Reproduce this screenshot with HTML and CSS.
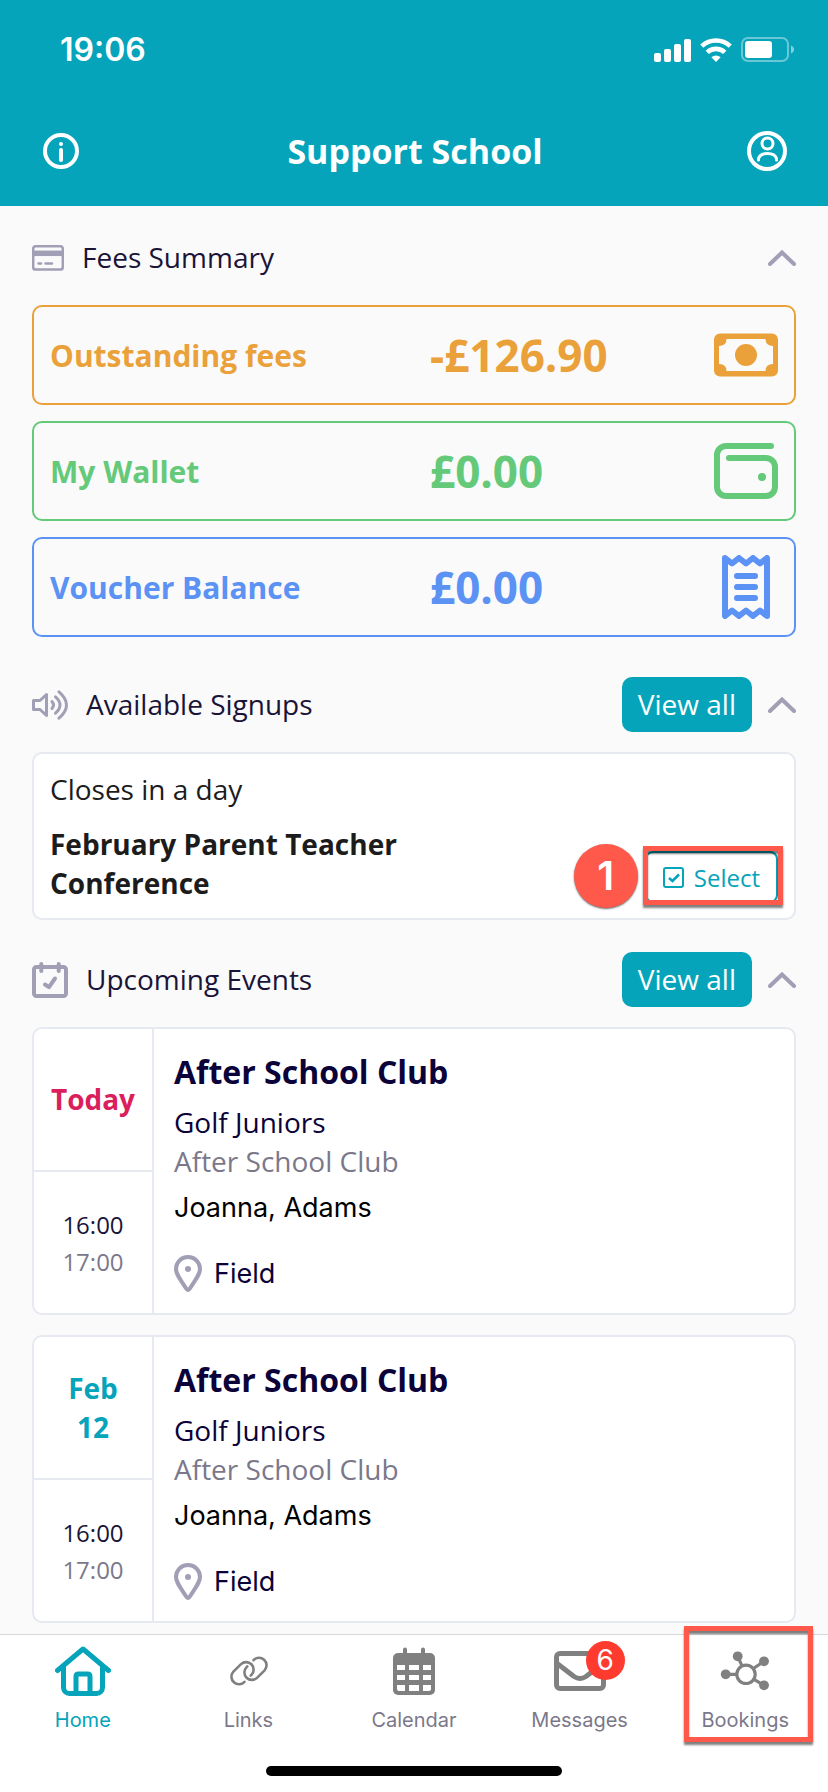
FILE: index.html
```html
<!DOCTYPE html>
<html lang="en">
<head>
  <meta charset="UTF-8">
  <meta name="viewport" content="width=device-width, initial-scale=1.0">
  <title>Support School</title>
  <link rel="stylesheet" href="styles.css">
</head>
<body>
  <header class="header">
    <div class="status">
      <span class="time">19:06</span>
      <div class="status-icons">
        <svg width="37" height="24" viewBox="0 0 37 24" fill="#fff">
          <rect x="0" y="15" width="7" height="9" rx="2"/>
          <rect x="10" y="11" width="7" height="13" rx="2"/>
          <rect x="20" y="6" width="7" height="18" rx="2"/>
          <rect x="30" y="1" width="7" height="23" rx="2"/>
        </svg>
        <svg width="32" height="24" viewBox="0 0 32 24" fill="none" stroke="#fff" stroke-width="4.6">
          <path d="M1.8 8.2a20.5 20.5 0 0 1 28.4 0"/>
          <path d="M7.2 14.4a12.8 12.8 0 0 1 17.6 0"/>
          <path d="M16 24l-4.6-4.7a6.6 6.6 0 0 1 9.2 0z" fill="#fff" stroke="none"/>
        </svg>
        <svg width="53" height="25" viewBox="0 0 53 25">
          <rect x="1" y="1" width="46" height="23" rx="6" fill="none" stroke="#fff" stroke-width="2" opacity=".4"/>
          <rect x="4" y="4" width="27" height="17" rx="3" fill="#fff"/>
          <path d="M50 8.500c4 1.500 4 6.500 0 8z" fill="#fff" opacity=".5"/>
        </svg>
      </div>
    </div>
    <div class="title-bar">
      <button class="icon-btn" aria-label="Information">
        <svg width="36" height="36" viewBox="0 0 36 36" fill="none" stroke="#fff" stroke-width="4" stroke-linecap="round">
          <circle cx="18" cy="18" r="16"/>
          <path d="M18 17v10"/>
          <circle cx="18" cy="11" r="2" fill="#fff" stroke="none"/>
        </svg>
      </button>
      <h1>Support School</h1>
      <button class="icon-btn profile" aria-label="Profile">
        <svg width="40" height="40" viewBox="0 0 40 40" fill="none" stroke="#fff" stroke-width="3" stroke-linecap="round">
          <circle cx="20" cy="20" r="18" stroke-width="4"/>
          <circle cx="20.500" cy="12.500" r="5.500"/>
          <path d="M11.500 29v-1.500q1.500-5 9-5t9 5V29"/>
        </svg>
      </button>
    </div>
  </header>

  <main>
    <section>
      <div class="section-head">
        <svg width="32" height="26" viewBox="0 0 32 26" fill="none" stroke="#a19fb5" stroke-width="2.500">
          <rect x="1.200" y="1.200" width="29.600" height="23.400" rx="2.500"/>
          <path d="M1 8.300h30" stroke-width="5.500"/>
          <path d="M6.500 18.500h2.500M13.500 18.500h6.500" stroke-linecap="round"/>
        </svg>
        <h2>Fees Summary</h2>
        <button class="icon-btn" aria-label="Collapse fees summary">
          <svg class="chevron" width="28" height="16" viewBox="0 0 28 16"><path d="M2 14L14 2.500 26 14"/></svg>
        </button>
      </div>
      <div class="fees">
        <a href="#fees" class="fee orange">
          <span class="fee-label">Outstanding fees</span>
          <span class="fee-amount">-£126.90</span>
          <svg width="64" height="64" viewBox="0 0 64 64" fill="currentColor">
            <path fill-rule="evenodd" d="M6 10.500h52a6 6 0 0 1 6 6v31a6 6 0 0 1-6 6H6a6 6 0 0 1-6-6v-31a6 6 0 0 1 6-6zM12.500 16q0 7-7.500 7v18q7.500 0 7.500 7h39q0-7 7.500-7V23q-7.500 0-7.500-7z"/>
            <circle cx="32" cy="32" r="11"/>
          </svg>
        </a>
        <a href="#wallet" class="fee green">
          <span class="fee-label">My Wallet</span>
          <span class="fee-amount">£0.00</span>
          <svg width="64" height="64" viewBox="0 0 64 64" fill="none" stroke="currentColor" stroke-width="6" stroke-linecap="round">
            <path d="M57 7H12a9 9 0 0 0-9 9v32a9 9 0 0 0 9 9h40a9 9 0 0 0 9-9V28a9 9 0 0 0-9-9H15"/>
            <circle cx="48" cy="38" r="4" fill="currentColor" stroke="none"/>
          </svg>
        </a>
        <a href="#voucher" class="fee blue">
          <span class="fee-label">Voucher Balance</span>
          <span class="fee-amount">£0.00</span>
          <svg width="64" height="64" viewBox="0 0 64 64" fill="none" stroke="currentColor" stroke-width="6" stroke-linecap="round" stroke-linejoin="round">
            <path d="M11 3l7 5.500L25 3l7 5.500L39 3l7 5.500L53 3v58l-7-5.500-7 5.500-7-5.500-7 5.500-7-5.500-7 5.500z"/>
            <path d="M23 21h18M23 32h18M23 43h18"/>
          </svg>
        </a>
      </div>
    </section>

    <section>
      <div class="section-head">
        <svg width="36" height="30" viewBox="0 0 36 30" fill="none" stroke="#a19fb5" stroke-width="3" stroke-linejoin="round" stroke-linecap="round">
          <path d="M1.500 10.500H8l6.500-6v21l-6.500-6H1.500z"/>
          <path d="M20 11.500q3 3.500 0 7"/>
          <path d="M23.500 6.800q9 8.200 0 16.400"/>
          <path d="M27 1.800q15 13.200 0 26.400"/>
        </svg>
        <h2>Available Signups</h2>
        <button class="view-all">View all</button>
        <button class="icon-btn" aria-label="Collapse available signups">
          <svg class="chevron" width="28" height="16" viewBox="0 0 28 16"><path d="M2 14L14 2.500 26 14"/></svg>
        </button>
      </div>
      <div class="card signup">
        <p class="closes">Closes in a day</p>
        <div class="signup-row">
          <h3>February Parent Teacher Conference</h3>
          <div class="select-wrap">
            <button class="select-btn">
              <svg width="21" height="21" viewBox="0 0 21 21" fill="none" stroke="currentColor" stroke-width="2">
                <rect x="1" y="1" width="19" height="19" rx="2"/>
                <path d="M6 11l3.500 3 6.500-6.500" stroke-width="2.500"/>
              </svg>
              Select
            </button>
            <span class="highlight"></span>
            <span class="step">1</span>
          </div>
        </div>
      </div>
    </section>

    <section class="events">
      <div class="section-head">
        <svg width="36" height="36" viewBox="0 0 36 36" fill="none" stroke="#a19fb5" stroke-width="4" stroke-linecap="round" stroke-linejoin="round">
          <rect x="2" y="5" width="32" height="29" rx="2.500"/>
          <path d="M9.300 2v7M26.700 2v7"/>
          <path d="M13 22.500l4 2.700 6-8.700"/>
        </svg>
        <h2>Upcoming Events</h2>
        <button class="view-all">View all</button>
        <button class="icon-btn" aria-label="Collapse upcoming events">
          <svg class="chevron" width="28" height="16" viewBox="0 0 28 16"><path d="M2 14L14 2.500 26 14"/></svg>
        </button>
      </div>

      <article class="card event">
        <div class="event-side">
          <div class="event-date today">Today</div>
          <div class="event-time"><span>16:00</span><span class="muted">17:00</span></div>
        </div>
        <div class="event-body">
          <h3>After School Club</h3>
          <p>Golf Juniors</p>
          <p class="muted">After School Club</p>
          <p class="person">Joanna, Adams</p>
          <p class="place">
            <svg width="28" height="37" viewBox="0 0 28 37" fill="none" stroke="#a19fb5" stroke-width="4" stroke-linejoin="round">
              <path d="M14 2C7 2 2 7.500 2 14c0 5 3 8.500 10.500 20q1.500 1.800 3 0C23 22.500 26 19 26 14c0-6.500-5-12-12-12z"/>
              <circle cx="14" cy="14" r="3" fill="#a19fb5" stroke="none"/>
            </svg>
            Field
          </p>
        </div>
      </article>

      <article class="card event">
        <div class="event-side">
          <div class="event-date">Feb<br>12</div>
          <div class="event-time"><span>16:00</span><span class="muted">17:00</span></div>
        </div>
        <div class="event-body">
          <h3>After School Club</h3>
          <p>Golf Juniors</p>
          <p class="muted">After School Club</p>
          <p class="person">Joanna, Adams</p>
          <p class="place">
            <svg width="28" height="37" viewBox="0 0 28 37" fill="none" stroke="#a19fb5" stroke-width="4" stroke-linejoin="round">
              <path d="M14 2C7 2 2 7.500 2 14c0 5 3 8.500 10.500 20q1.500 1.800 3 0C23 22.500 26 19 26 14c0-6.500-5-12-12-12z"/>
              <circle cx="14" cy="14" r="3" fill="#a19fb5" stroke="none"/>
            </svg>
            Field
          </p>
        </div>
      </article>
    </section>
  </main>

  <footer class="footer">
    <nav class="tabs">
      <a href="#home" class="tab selected">
        <svg width="56" height="56" viewBox="0 0 56 56" fill="none" stroke="#05a4ba" stroke-width="5" stroke-linecap="round" stroke-linejoin="round">
          <path d="M2.500 27.500L28 6l25.500 21.500"/>
          <path d="M8.500 24v20.500a6 6 0 0 0 6 6h27a6 6 0 0 0 6-6V24"/>
          <path d="M21 50V33.500q0-2.500 2.500-2.500h9q2.500 0 2.500 2.500V50"/>
        </svg>
        Home
      </a>
      <a href="#links" class="tab">
        <svg width="56" height="56" viewBox="0 0 56 56" fill="none" stroke="#808080" stroke-width="2.600" stroke-linecap="round">
          <path d="M24.500 38.800A7.500 7.500 0 0 1 13.400 28.700L21 21.100A7.500 7.500 0 0 1 31.600 31.700l-.9.9"/>
          <path d="M33.500 17.200A7.500 7.500 0 0 1 44.600 27.300L37 34.900A7.500 7.500 0 0 1 26.400 24.300l.9-.9"/>
        </svg>
        Links
      </a>
      <a href="#calendar" class="tab">
        <svg width="56" height="56" viewBox="0 0 56 56">
          <rect x="7" y="10" width="42" height="42" rx="5" fill="#808080"/>
          <path d="M19 6.500v6M37 6.500v6" stroke="#808080" stroke-width="4" stroke-linecap="round"/>
          <path d="M11 22h8v5h-8zM23 22h10v5H23zM37 22h8v5h-8zM11 32h8v5h-8zM23 32h10v5H23zM37 32h8v5h-8zM13 48q-2 0-2-2v-4h8v6zM23 42h10v6H23zM37 42h8v4q0 2-2 2h-6z" fill="#fff"/>
        </svg>
        Calendar
      </a>
      <a href="#messages" class="tab">
        <span class="tab-icon">
          <svg width="56" height="56" viewBox="0 0 56 56" fill="none" stroke="#808080" stroke-width="5">
            <rect x="4.500" y="10.500" width="47" height="35" rx="3.500"/>
            <path d="M4.500 20L22 33.500q6 4 12 0L51.500 20"/>
          </svg>
          <span class="badge">6</span>
        </span>
        Messages
      </a>
      <a href="#bookings" class="tab">
        <svg width="56" height="56" viewBox="0 0 56 56" fill="#808080" stroke="#808080" stroke-width="3.200">
          <circle cx="29" cy="31.300" r="9.200" fill="none"/>
          <path d="M20.700 13.300l4.300 9.500M47 18.300l-10.300 7M47 42.300l-10-6M8.700 31.300h11"/>
          <g stroke="none">
            <circle cx="20.700" cy="13.300" r="4.900"/>
            <circle cx="47" cy="18.300" r="4.900"/>
            <circle cx="47" cy="42.300" r="4.900"/>
            <circle cx="8.700" cy="31.300" r="4.900"/>
          </g>
        </svg>
        Bookings
        <span class="highlight"></span>
      </a>
    </nav>
    <div class="home-indicator"></div>
  </footer>
</body>
</html>
```
FILE: styles.css
```css
* {
  box-sizing: border-box;
}

body {
  margin: 0;
  min-height: 100vh;
  display: flex;
  flex-direction: column;
  background: #fafafa;
  color: #1a1438;
  font-family: 'Open Sans', 'Noto Sans', sans-serif;
  font-size: 28px;
  line-height: 39px;
}

h1, h2, h3, p {
  margin: 0;
}

svg {
  display: block;
  flex-shrink: 0;
}

a {
  color: inherit;
  text-decoration: none;
}

button {
  font: inherit;
  border: none;
  cursor: pointer;
}

.icon-btn {
  padding: 0;
  background: none;
}

/* Header */
.header {
  background: #05a4ba;
  color: #fff;
}

.status {
  display: flex;
  justify-content: space-between;
  align-items: center;
  padding: 30px 34px 27px 60px;
}

.time {
  font-family: Inter, sans-serif;
  font-size: 32px;
  font-weight: 600;
}

.status-icons {
  display: flex;
  align-items: center;
  gap: 9px;
}

.title-bar {
  display: grid;
  grid-template-columns: 1fr auto 1fr;
  align-items: center;
  height: 110px;
  padding: 0 41px 0 43px;
}

.title-bar h1 {
  font-size: 34px;
}

.profile {
  justify-self: end;
}

/* Sections */
main {
  padding: 24px 32px 11px;
  display: flex;
  flex-direction: column;
  gap: 40px;
}

.section-head {
  display: flex;
  align-items: center;
  gap: 16px;
  min-height: 55px;
  margin-bottom: 20px;
}

.section-head h2 {
  flex: 1;
  padding-left: 2px;
  font-size: 28px;
  font-weight: 400;
}

.chevron {
  fill: none;
  stroke: #a19fb5;
  stroke-width: 4;
  stroke-linecap: round;
}

.view-all {
  padding: 8px 16px;
  border-radius: 10px;
  background: #05a4ba;
  color: #fff;
}

/* Fees */
.fees {
  display: flex;
  flex-direction: column;
  gap: 16px;
}

.fee {
  display: grid;
  grid-template-columns: 380px 1fr auto;
  align-items: center;
  height: 100px;
  padding: 0 16px;
  border: 2px solid currentColor;
  border-radius: 10px;
  font-weight: 700;
}

.fee-label {
  font-size: 30px;
}

.fee-amount {
  font-size: 44px;
}

.orange {
  color: #eaa13a;
}

.green {
  color: #64c979;
}

.blue {
  color: #5b92f3;
}

/* Cards */
.card {
  background: #fff;
  border: 2px solid #e6e9f0;
  border-radius: 10px;
}

.signup {
  padding: 16px 16px 15px;
  color: #1c1c1c;
}

.signup-row {
  display: flex;
  justify-content: space-between;
  align-items: flex-end;
  margin-top: 16px;
}

.signup-row h3 {
  max-width: 400px;
  font-size: 28px;
}

.select-wrap {
  position: relative;
}

.select-btn {
  display: flex;
  align-items: center;
  gap: 10px;
  height: 52px;
  padding: 0 16px;
  border: 2px solid #05a4ba;
  border-radius: 8px;
  background: #fff;
  color: #05a4ba;
  font-size: 24px;
}

/* Red callouts */
.highlight {
  position: absolute;
  top: -5px;
  right: -5px;
  bottom: -2px;
  left: -2px;
  border: 5px solid #ff594c;
  box-shadow: 0 3px 2px rgba(0, 0, 0, 0.5), inset 0 3px 2px rgba(0, 0, 0, 0.5);
  pointer-events: none;
}

.step {
  position: absolute;
  top: -7px;
  right: calc(100% + 7px);
  width: 64px;
  height: 64px;
  border-radius: 50%;
  background: #ff594c;
  box-shadow: 0 1px 2px rgba(0, 0, 0, 0.6);
  color: #fff;
  font-family: Inter, sans-serif;
  font-size: 40px;
  font-weight: 600;
  line-height: 64px;
  text-align: center;
}

/* Events */
.events {
  margin-top: -8px;
}

.event {
  display: flex;
}

.event + .event {
  margin-top: 20px;
}

.event-side {
  display: flex;
  flex-direction: column;
  width: 120px;
  border-right: 2px solid #e6e9f0;
  text-align: center;
}

.event-date,
.event-time {
  flex: 1;
  display: flex;
  flex-direction: column;
  justify-content: center;
}

.event-date {
  border-bottom: 2px solid #e6e9f0;
  color: #05a4ba;
  font-weight: 700;
}

.event-date.today {
  color: #db1f5c;
}

.event-time {
  font-size: 24px;
  line-height: 37px;
}

.event-body {
  flex: 1;
  padding: 20px 20px 21px;
  color: #0a0238;
}

.event-body h3 {
  margin-bottom: 8px;
  font-size: 32px;
  line-height: 46px;
}

.muted {
  color: #7b788a;
}

.person,
.place {
  font-family: Inter, sans-serif;
  font-size: 27px;
}

.person {
  margin-top: 8px;
  color: #000;
  line-height: 38px;
}

.place {
  display: flex;
  align-items: center;
  gap: 12px;
  margin-top: 28px;
  line-height: 37px;
}

/* Bottom tabs */
.footer {
  position: sticky;
  bottom: 0;
  margin-top: auto;
  padding-bottom: 16px;
  border-top: 1px solid #d8d8d8;
  background: #fff;
}

.tabs {
  display: grid;
  grid-template-columns: repeat(5, 1fr);
}

.tab {
  position: relative;
  display: flex;
  flex-direction: column;
  align-items: center;
  gap: 8px;
  padding-top: 8px;
  color: #7b788a;
  font-family: Inter, sans-serif;
  font-size: 20px;
  line-height: 26px;
}

.tab.selected {
  color: #05a4ba;
}

.tab .highlight {
  top: -9px;
  right: 15px;
  bottom: -9px;
  left: 22px;
}

.tab-icon {
  position: relative;
}

.badge {
  position: absolute;
  top: -2px;
  left: 34px;
  width: 39px;
  height: 39px;
  border-radius: 50%;
  background: #ff3b30;
  color: #fff;
  font-size: 28px;
  line-height: 38px;
  text-align: center;
}

.home-indicator {
  width: 296px;
  height: 10px;
  margin: 33px auto 0;
  border-radius: 5px;
  background: #000;
}
```
